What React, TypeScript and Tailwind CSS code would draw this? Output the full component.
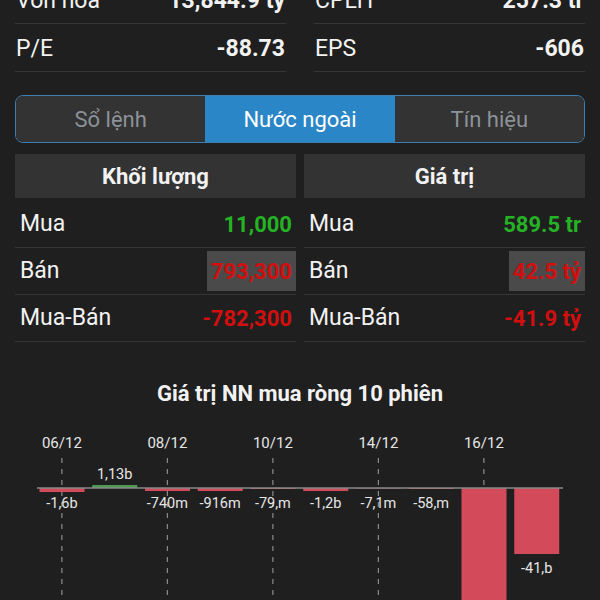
import React from "react";

const font = { fontFamily: "Roboto, 'Noto Sans', sans-serif" };

function InfoRow({ label, value }: { label: string; value: string }) {
  return (
    <div className="flex h-[48px] items-center justify-between border-b border-[#363636] px-[1px] pt-[3px]">
      <span className="text-[23px] text-[#f2f2f2]">{label}</span>
      <span className="text-[23px] font-bold text-[#f2f2f2]">{value}</span>
    </div>
  );
}

type Cell = { label: string; value: string; color: string; box?: boolean };

function Table({ title, rows }: { title: string; rows: Cell[] }) {
  return (
    <div className="flex flex-col">
      <div className="flex h-[44px] items-center justify-center bg-[#333333] text-[22px] font-bold text-[#f2f2f2]">
        {title}
      </div>
      <div className="mt-[3px] flex flex-col">
        {rows.map((r) => (
          <div
            key={r.label}
            className="flex h-[47px] items-center justify-between border-b border-[#363636] pl-[5px]"
          >
            <span className="text-[23px] text-[#f2f2f2]">{r.label}</span>
            {r.box ? (
              <span
                className={`flex h-[40px] items-center bg-[#4a4a4a] pl-[4px] pr-[4px] text-[22px] font-bold ${r.color}`}
              >
                {r.value}
              </span>
            ) : (
              <span className={`pr-[4px] text-[22px] font-bold ${r.color}`}>{r.value}</span>
            )}
          </div>
        ))}
      </div>
    </div>
  );
}

const bars = [
  { h: -4, label: "-1,6b" },
  { h: 3, label: "1,13b" },
  { h: -3, label: "-740m" },
  { h: -3, label: "-916m" },
  { h: -1, label: "-79,m" },
  { h: -3, label: "-1,2b" },
  { h: -0.5, label: "-7,1m" },
  { h: -1, label: "-58,m" },
  { h: -200, label: "-98,b" },
  { h: -66, label: "-41,b" },
];

const dates: { i: number; t: string }[] = [
  { i: 0, t: "06/12" },
  { i: 2, t: "08/12" },
  { i: 4, t: "10/12" },
  { i: 6, t: "14/12" },
  { i: 8, t: "16/12" },
];

function Chart() {
  const x0 = 35.5;
  const slot = 52.75;
  const axis = 67;
  const cx = (i: number) => x0 + slot * i + slot / 2;
  return (
    <svg width={600} height={180} viewBox="0 0 600 180" className="block">
      {dates.map((d) => (
        <g key={d.t}>
          <line
            x1={cx(d.i)}
            x2={cx(d.i)}
            y1={37}
            y2={180}
            stroke="#8c8c8c"
            strokeWidth={1.2}
            strokeDasharray="5 6"
          />
          <text
            x={cx(d.i)}
            y={27}
            textAnchor="middle"
            fill="#e6e6e6"
            fontSize={15}
            style={font}
          >
            {d.t}
          </text>
        </g>
      ))}
      {bars.map((b, i) => {
        const x = x0 + slot * i + 4;
        const w = 45;
        if (b.h > 0) {
          return (
            <g key={i}>
              <rect x={x} y={axis - b.h} width={w} height={b.h} fill="#4f9a52" />
              <text
                x={cx(i)}
                y={axis - b.h - 6}
                textAnchor="middle"
                fill="#e6e6e6"
                fontSize={14.5}
                style={font}
              >
                {b.label}
              </text>
            </g>
          );
        }
        const hh = -b.h;
        return (
          <g key={i}>
            <rect x={x} y={axis} width={w} height={hh} fill="#d34a5a" />
            <text
              x={cx(i)}
              y={hh > 10 ? axis + hh + 19 : 87}
              textAnchor="middle"
              fill="#e6e6e6"
              fontSize={14.5}
              style={font}
            >
              {b.label}
            </text>
          </g>
        );
      })}
      <line x1={37} x2={563} y1={axis} y2={axis} stroke="#8a8a8a" strokeWidth={1.5} />
    </svg>
  );
}

export default function App() {
  return (
    <div className="h-[600px] w-[600px] overflow-hidden bg-[#1f1f1f]" style={font}>
      <div className="px-[15px]">
        <div className="mt-[-24px] grid grid-cols-2 gap-x-[28px]">
          <div className="flex flex-col">
            <InfoRow label="Vốn hóa" value="13,844.9 tỷ" />
            <InfoRow label="P/E" value="-88.73" />
          </div>
          <div className="flex flex-col">
            <InfoRow label="CPLH" value="257.3 tr" />
            <InfoRow label="EPS" value="-606" />
          </div>
        </div>

        <div className="mt-[23px] grid h-[48px] grid-cols-3 overflow-hidden rounded-[8px] border border-[#3d7fb3]">
          <div className="flex items-center justify-center bg-[#333333] text-[22px] text-[#8d9298]">
            Sổ lệnh
          </div>
          <div className="flex items-center justify-center bg-[#2a86c6] text-[22px] text-white">
            Nước ngoài
          </div>
          <div className="flex items-center justify-center bg-[#333333] text-[22px] text-[#8d9298]">
            Tín hiệu
          </div>
        </div>

        <div className="mt-[11px] grid grid-cols-2 gap-x-[8px]">
          <Table
            title="Khối lượng"
            rows={[
              { label: "Mua", value: "11,000", color: "text-[#25b325]" },
              { label: "Bán", value: "793,300", color: "text-[#d10f0f]", box: true },
              { label: "Mua-Bán", value: "-782,300", color: "text-[#d10f0f]" },
            ]}
          />
          <Table
            title="Giá trị"
            rows={[
              { label: "Mua", value: "589.5 tr", color: "text-[#25b325]" },
              { label: "Bán", value: "42.5 tỷ", color: "text-[#d10f0f]", box: true },
              { label: "Mua-Bán", value: "-41.9 tỷ", color: "text-[#d10f0f]" },
            ]}
          />
        </div>
      </div>

      <div className="mt-[38px] flex h-[26px] items-center justify-center text-[22px] font-bold text-[#f2f2f2]">
        Giá trị NN mua ròng 10 phiên
      </div>
      <div className="mt-[15px]">
        <Chart />
      </div>
    </div>
  );
}
